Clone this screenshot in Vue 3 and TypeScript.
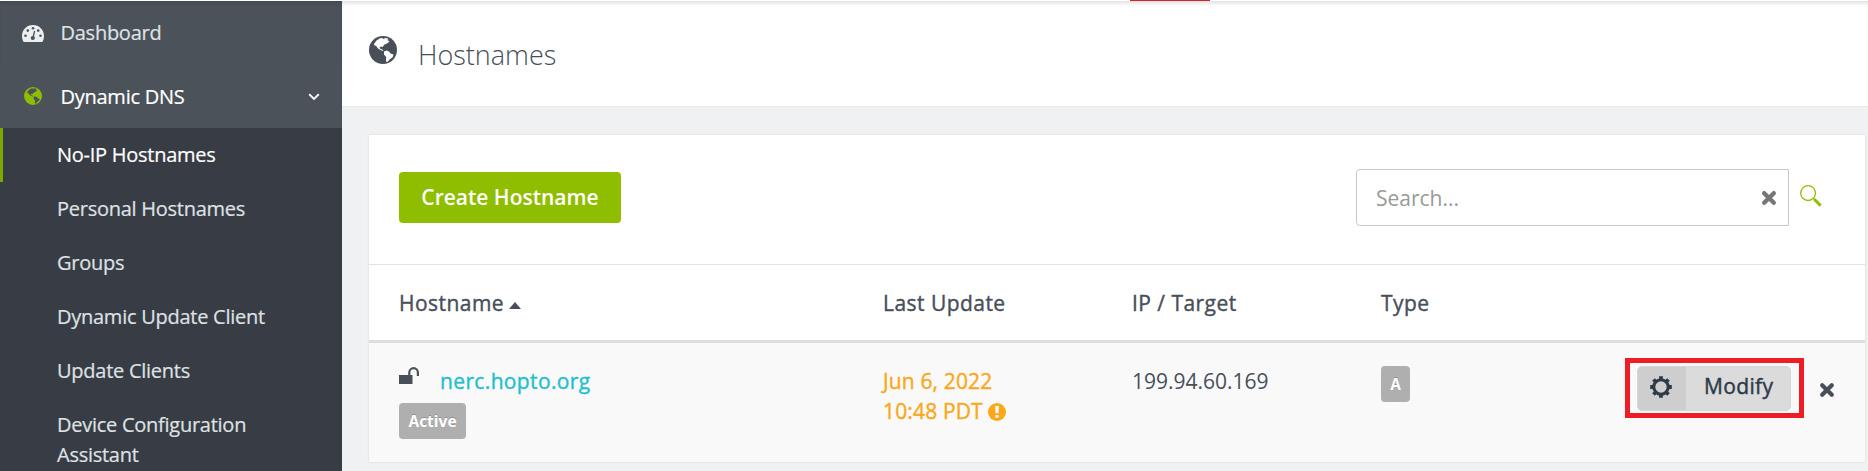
<script setup lang="ts">
import { ref } from 'vue'

const subItems = [
  'No-IP Hostnames',
  'Personal Hostnames',
  'Groups',
  'Dynamic Update Client',
  'Update Clients',
  'Device Configuration Assistant',
]
const active = ref('No-IP Hostnames')
const query = ref('')
const land = 'M5 8L7.500 4.500L11 2.200L14 2L13.500 3.200L16.500 2L19.500 2.800L18.500 4L20.500 5.500L18 7.500L15.500 8.500L13.500 11L12 10.500L10.500 11.500L11.500 13L13.500 13.500L14.500 15L12 14.200L9 12.500L7 9.800L5.500 9.500zM15 15.500L17.500 14.500L20 15.500L21.500 17.500L24.500 18.500L23.500 21.500L21 23L18.500 26L17 25.500L17.200 21L15 18.500z'
</script>

<template>
  <div class="page">
    <div class="topline"><span class="tab"></span></div>
    <div class="body">
      <nav class="sidebar">
        <a class="item">
          <svg class="gauge" viewBox="0 0 22 17">
            <path fill="#eceeef" d="M11 0C4.900 0 0 4.900 0 10.800c0 2 .4 3.900 1.100 5.500.2.500.6.700 1.100.700h17.600c.5 0 .9-.2 1.100-.7.700-1.600 1.100-3.500 1.100-5.500C22 4.900 17.100 0 11 0z" />
            <g fill="#4b525a"><circle cx="3.500" cy="10.800" r="1.300" /><circle cx="5.800" cy="5.600" r="1.300" /><circle cx="11" cy="3.200" r="1.300" /><circle cx="16.200" cy="5.600" r="1.300" /><circle cx="18.500" cy="10.800" r="1.300" /><circle cx="10.800" cy="13" r="2.100" /></g>
            <path d="M11 12.500L12.600 6" stroke="#4b525a" stroke-width="1.300" />
          </svg>
          <span>Dashboard</span>
        </a>
        <a class="item open">
          <svg class="globe-sm" viewBox="0 0 28 28">
            <circle cx="14" cy="14" r="14" fill="#8fbe00" />
            <path fill="#4b525a" :d="land" />
          </svg>
          <span>Dynamic DNS</span>
          <svg class="chev" viewBox="0 0 12 8"><path d="M1.200 1.300L6 5.900l4.800-4.600" fill="none" stroke="#fff" stroke-width="1.900" /></svg>
        </a>
        <a v-for="s in subItems" :key="s" class="sub" :class="{ active: s === active }" @click="active = s">{{ s }}</a>
      </nav>
      <main>
        <header>
          <svg class="globe" viewBox="0 0 28 28">
            <circle cx="14" cy="14" r="14" fill="#484f59" />
            <path fill="#fff" :d="land" />
          </svg>
          <h1>Hostnames</h1>
        </header>
        <section class="panel">
          <div class="tools">
            <button class="create">Create Hostname</button>
            <div class="search">
              <input v-model="query" placeholder="Search..." />
              <svg class="x" viewBox="0 0 14 14"><path d="M2.200 2.200l9.600 9.600M11.800 2.200l-9.600 9.600" stroke="#777" stroke-width="4.400" stroke-linecap="round" /></svg>
            </div>
            <svg class="mag" viewBox="0 0 22 22"><circle cx="8.100" cy="8.100" r="7.400" fill="none" stroke="#8fbe00" stroke-width="1.300" /><path d="M13.300 13.300l1.500 1.500" stroke="#8fbe00" stroke-width="1.500" /><path d="M14.300 14.300l6.300 6.300" stroke="#8fbe00" stroke-width="3" /></svg>
          </div>
          <div class="row head">
            <div>Hostname<svg class="caret" viewBox="0 0 12 7"><path d="M0 7L6 0l6 7z" fill="#484f59" /></svg></div>
            <div>Last Update</div>
            <div>IP / Target</div>
            <div>Type</div>
          </div>
          <div class="row data">
            <div class="host">
              <div class="line">
                <svg class="lock" viewBox="0 0 20 17"><path d="M0 8h13.500v9H0z" fill="#484f59" /><path d="M10.300 9V5.500a4.300 4.300 0 0 1 8.600 0V9" fill="none" stroke="#484f59" stroke-width="2.200" /></svg>
                <a class="link">nerc.hopto.org</a>
              </div>
              <span class="badge">Active</span>
            </div>
            <div class="date"><span>Jun 6, 2022</span><br /><span>10:48 PDT</span><svg class="warn" viewBox="0 0 18 18"><circle cx="9" cy="9" r="9" fill="#faa819" /><path d="M7.200 3h3.600l-.4 7.300H7.600zM7.400 12h3.200v2.800H7.400z" fill="#fff" /></svg></div>
            <div class="ip">199.94.60.169</div>
            <div><span class="badge type">A</span></div>
            <div class="actions">
              <div class="mark">
                <button class="modify">
                  <span class="cog"><svg viewBox="0 0 22 22"><circle cx="11" cy="11" r="7.200" fill="none" stroke="#2d3a47" stroke-width="3" /><path d="M11 .2v3M11 18.800v3M.2 11h3M18.800 11h3M3.500 3.500l2 2M16.500 16.500l2 2M18.500 3.500l-2 2M5.500 16.500l-2 2" stroke="#2d3a47" stroke-width="3.800" /></svg></span>
                  <span class="mt">Modify</span>
                </button>
              </div>
              <svg class="x2" viewBox="0 0 14 14"><path d="M2.200 2.200l9.600 9.600M11.800 2.200l-9.600 9.600" stroke="#484f59" stroke-width="4.200" stroke-linecap="round" /></svg>
            </div>
          </div>
        </section>
      </main>
    </div>
  </div>
</template>

<style>
body { margin: 0; overflow: hidden; }
</style>

<style scoped>
* { box-sizing: border-box; }
.page { width: 1868px; height: 471px; overflow: hidden; background: #f0f1f3; font: 21px/30px "Open Sans", "Noto Sans", sans-serif; color: #484f59; }
.topline { height: 1px; background: #fff; display: flex; }
.tab { width: 80px; margin-left: 1130px; background: #d8202a; }
.body { display: flex; height: 470px; }
.sidebar { width: 342px; height: 470px; background: #383c44; font-size: 20px; letter-spacing: -0.26px; color: #dfe2e4; -webkit-text-stroke: 0.2px; flex: none; overflow: hidden; }
.item { display: flex; align-items: center; height: 64px; background: #4b525a; padding-left: 22px; }
.item:first-child { height: 63px; box-shadow: inset 0 4px 4px -3px #3d444b; }
.open { color: #fff; padding-top: 2px; }
.gauge { width: 22px; height: 17px; margin: 2px 16.500px 0 0; }
.globe-sm { width: 18px; height: 18px; margin: 0 18.500px 3px 2px; }
.chev { width: 12px; height: 8px; margin-left: auto; margin-right: 22px; }
.sub { display: block; padding: 12px 60px 12px 54px; border-left: 3px solid transparent; }
.active { border-left-color: #7aa800; color: #fff; }
main { width: 1526px; flex: none; }
header { height: 106px; background: #fff; border-bottom: 1px solid #e6e8ea; box-shadow: inset 0 4px 4px -2px #ddd; display: flex; padding-left: 27px; }
.globe { width: 28px; height: 28px; margin-top: 35px; }
h1 { margin: 35px 0 0 21px; font-size: 27px; line-height: 38px; font-weight: 300; }
.panel { margin: 28px 0 0 27px; width: 1496px; height: 327px; background: #fff; box-shadow: 0 0 2px #d5d7da; }
.tools { height: 130px; border-bottom: 1px solid #e2e3e4; display: flex; padding-left: 30px; }
button { border: 0; padding: 0; font: inherit; color: inherit; display: block; }
.create { width: 222px; height: 51px; margin-top: 37px; padding-bottom: 1px; background: #8fbe00; color: #fff; font-weight: 600; border-radius: 4px; }
.search { width: 433px; height: 57px; margin: 34px 0 0 735px; border: 1px solid #c8c8c8; border-radius: 4px 0 0 4px; display: flex; align-items: center; }
input { flex: 1; min-width: 0; border: 0; outline: 0; background: none; font: inherit; padding: 0 0 0 19px; color: #555; }
input::placeholder { color: #999; opacity: 1; }
.x { width: 14px; height: 14px; margin-right: 12px; overflow: visible; }
.mag { width: 22px; height: 22px; margin: 50px 0 0 11px; }
.row { display: grid; grid-template-columns: 484px 249px 249px 244px 1fr; padding-left: 30px; }
.head { height: 78px; border-bottom: 3px solid #dcdddd; padding-top: 23px; letter-spacing: 0.46px; -webkit-text-stroke: 0.4px; }
.caret { width: 12px; height: 7px; margin-left: 4.500px; vertical-align: 2px; }
.data { height: 119px; background: #f9f9f9; padding-top: 23px; }
.line { display: flex; height: 30px; }
.lock { width: 20px; height: 17px; margin: 1px 21px 0 0; }
.link { color: #25bfd0; letter-spacing: 0.36px; -webkit-text-stroke: 0.4px; }
.badge { display: block; width: 67px; height: 36px; margin-top: 7px; border-radius: 4px; background: #afafaf; color: #fff; font-size: 15.500px; line-height: 36px; font-weight: 700; text-align: center; text-shadow: 0 -1px 0 rgba(0,0,0,.2); }
.type { width: 29px; margin-top: 0; }
.date { color: #faa819; letter-spacing: 0.15px; -webkit-text-stroke: 0.4px; }
.warn { width: 18px; height: 18px; margin-left: 5px; vertical-align: -2px; }
.actions { display: flex; margin: -8px 0 0; }
.mark { width: 179px; height: 60px; border: 5px solid #ee1c25; padding: 3px 7px; }
.modify { display: flex; width: 154px; height: 45px; border-radius: 5px; overflow: hidden; background: #dbdbdb; border: 1px solid #d5d5d5; color: #2d3a47; letter-spacing: 0.35px; -webkit-text-stroke: 0.4px; }
.cog { width: 48px; height: 43px; background: #cecece; padding: 9px 0 0 12px; }
.cog svg { width: 22px; height: 22px; display: block; }
.mt { margin: 4px 0 0 18px; }
.x2 { width: 14px; height: 14px; margin: 25px 0 0 16px; flex: none; overflow: visible; }
</style>
